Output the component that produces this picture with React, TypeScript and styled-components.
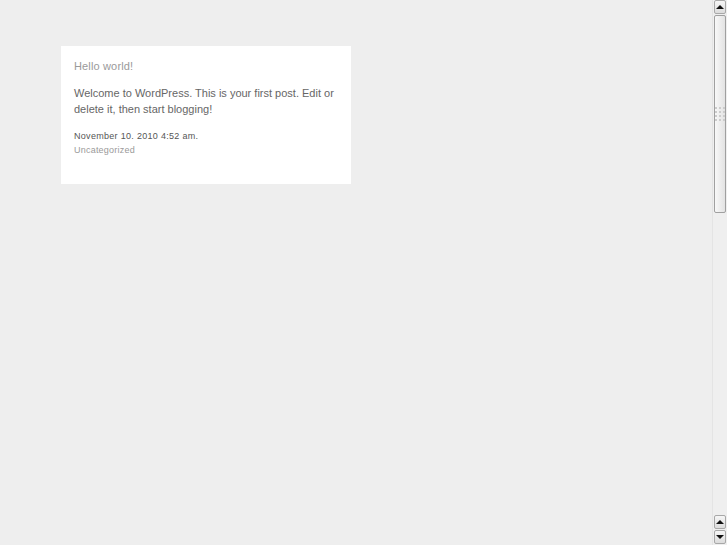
import React from 'react'
import styled, { createGlobalStyle } from 'styled-components'

const GlobalStyle = createGlobalStyle`
  html, body {
    margin: 0;
    padding: 0;
    height: 100%;
    overflow: hidden;
    background: #eeeeee;
    font-family: "Liberation Sans", Arial, sans-serif;
  }
`

const App: React.FC = () => {
  return (
    <>
      <GlobalStyle />
      <Page>
        <Main>
          <Post>
            <PostTitle>Hello world!</PostTitle>
            <PostBody>
              Welcome to WordPress. This is your first post. Edit or delete it, then start blogging!
            </PostBody>
            <PostDate>November 10. 2010 4:52 am.</PostDate>
            <PostCategory>Uncategorized</PostCategory>
          </Post>
        </Main>

        <Scrollbar>
          <ArrowButton>
            <Arrow direction="up" />
          </ArrowButton>
          <Track>
            <Thumb>
              <Grip>
                {Array.from({ length: 12 }).map((_, i) => (
                  <Dot key={i} />
                ))}
              </Grip>
            </Thumb>
          </Track>
          <ArrowButton>
            <Arrow direction="up" />
          </ArrowButton>
          <ArrowButton>
            <Arrow direction="down" />
          </ArrowButton>
        </Scrollbar>
      </Page>
    </>
  )
}

export default App

// ========================================
// STYLED COMPONENTS
// ========================================

const Page = styled.div`
  display: flex;
  width: 100vw;
  height: 100vh;
`

const Main = styled.div`
  flex: 1;
  padding: 46px 0 0 61px;
`

const Post = styled.div`
  width: 264px;
  height: 113px;
  padding: 12px 13px 13px 13px;
  background: #ffffff;
`

const PostTitle = styled.h2`
  margin: 0 0 11px;
  font-size: 11px;
  font-weight: 400;
  line-height: 16px;
  letter-spacing: 0.15px;
  color: #9a9a9a;
`

const PostBody = styled.p`
  margin: 0 0 12px;
  font-size: 11px;
  line-height: 16px;
  color: #666666;
`

const PostDate = styled.div`
  font-size: 9px;
  line-height: 14px;
  letter-spacing: 0.3px;
  color: #555555;
`

const PostCategory = styled.div`
  font-size: 9px;
  line-height: 14px;
  letter-spacing: 0.22px;
  color: #9a9a9a;
`

const Scrollbar = styled.div`
  width: 15px;
  flex-shrink: 0;
  display: flex;
  flex-direction: column;
  background: #efefef;
  border-left: 1px solid #e4e4e4;
  box-sizing: border-box;
`

const ArrowButton = styled.div`
  height: 14px;
  margin: 0 1px 1px 1px;
  border: 1px solid #a8a8a8;
  border-radius: 2px;
  background: linear-gradient(#f6f6f6, #dcdcdc);
  display: flex;
  align-items: center;
  justify-content: center;
  box-sizing: border-box;
`

const Arrow = styled.div<{ direction: 'up' | 'down' }>`
  width: 0;
  height: 0;
  border-left: 4px solid transparent;
  border-right: 4px solid transparent;
  ${props =>
    props.direction === 'up'
      ? 'border-bottom: 4px solid #111;'
      : 'border-top: 4px solid #111;'}
`

const Track = styled.div`
  flex: 1;
  padding-bottom: 302px;
`

const Thumb = styled.div`
  height: 198px;
  margin: 0 1px;
  border: 1px solid #a0a0a0;
  border-radius: 2px;
  background: linear-gradient(90deg, #f8f8f8, #e3e3e3);
  box-sizing: border-box;
  display: flex;
  align-items: center;
  justify-content: center;
`

const Grip = styled.div`
  display: grid;
  grid-template-columns: repeat(3, 2px);
  gap: 2px 2px;
`

const Dot = styled.span`
  width: 2px;
  height: 2px;
  background: #cccccc;
`
